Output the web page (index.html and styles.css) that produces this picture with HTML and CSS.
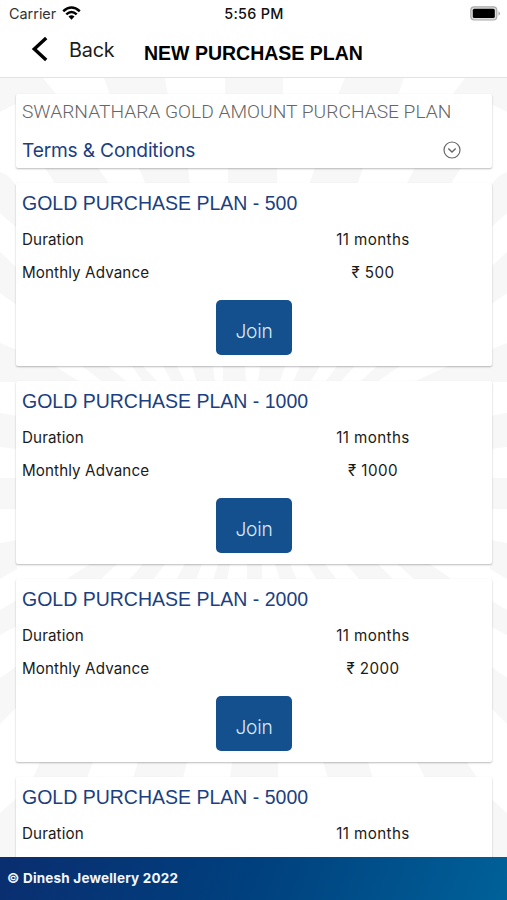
FILE: index.html
```html
<!DOCTYPE html>
<html lang="en">
<head>
<meta charset="utf-8">
<title>New Purchase Plan</title>
<link rel="stylesheet" href="styles.css">
</head>
<body>
<div class="screen">
  <header class="top">
    <div class="status">
      <div class="carrier"><span>Carrier</span>
        <svg width="19" height="14" viewBox="0 0 19 14"><g fill="none" stroke="#000" stroke-width="2.5"><path d="M1.2 5.2Q9.5 -2.3 17.8 5.2"/><path d="M4.3 8.4Q9.5 3.7 14.7 8.4"/></g><path d="M6.5 10.6Q9.5 8.1 12.500 10.600L9.500 13.700Z"/></svg>
      </div>
      <div class="clock">5:56 PM</div>
      <div class="power">
        <svg width="31" height="15" viewBox="0 0 31 15"><rect x=".8" y=".8" width="26" height="13.200" rx="3.500" fill="#ddd" stroke="#aaa" stroke-width="1.200"/><rect x="2.800" y="2.800" width="22" height="9.200" rx="1.500"/><path d="M28.500 5.200q3 2.200 0 4.500z" fill="#aaa"/></svg>
      </div>
    </div>
    <div class="nav">
      <svg class="chevron" width="18" height="28" viewBox="0 0 18 28"><path d="M15.200 3L3.300 14L15.200 25" fill="none" stroke="#000" stroke-width="3.400"/></svg>
      <span class="back">Back</span>
      <h1>NEW PURCHASE PLAN</h1>
    </div>
  </header>
  <main>
    <svg class="rays" width="507" height="779" viewBox="0 78 507 779">
      <g fill="#f7f7f7">
        <path d="M0 78H43L57 95Q25 97 0 112ZM104 78H165L168 95H110ZM225 78H283V95H225ZM345 78H404L398 95H338ZM465 78H507V112Q482 97 452 95Z"/>
        <path d="M45 168H98L110 185H56ZM139 168H188L190 185H146ZM228 168H277V185H228ZM315 168H363L357 185H309ZM415 168H461L450 185H406Z"/>
        <path d="M0 366H55L80 382H0ZM82 366H108L127 382H103ZM132 366H143L158 382H143ZM163 366H177L185 382H172ZM192 366H213L215 382H197ZM223 366H245L246 382H223ZM260 366H285L280 382H258ZM300 366H320L310 382H293ZM337 366H355L340 382H325ZM377 366H400L377 382H360ZM448 366H507V382H413Z"/>
        <path d="M90 564H117L100 580H65ZM143 564H165L153 580H129ZM185 564H202L196 580H176ZM218 564H230L227 580H213ZM247 564H262V580H247ZM275 564H290L297 580H280ZM307 564H325L337 580H317ZM346 564H378L394 580H360ZM397 564H430L453 580H415Z"/>
        <path d="M40 762H93L87 778H33ZM138 762H187L183 778H133ZM232 762H278V778H230ZM323 762H368L373 778H328ZM417 762H467L477 778H425Z"/>
        <path id="side" d="M0 172Q9 174 17 187V228L0 213ZM0 252L17 268V305L0 293ZM0 343L17 350V382L0 373ZM0 413L17 416V449L0 447ZM0 478H17V509H0ZM0 543L17 540V569L0 579ZM0 610L17 600V626L0 635ZM0 678L17 666V707L0 724ZM0 813L17 798V857H0Z"/>
        <use href="#side" transform="translate(507 0) scale(-1 1)"/>
      </g>
    </svg>
    <section class="card terms">
      <h2 class="scheme">SWARNATHARA GOLD AMOUNT PURCHASE PLAN</h2>
      <div class="terms-row"><span>Terms &amp; Conditions</span>
        <svg width="18" height="18" viewBox="0 0 18 18" fill="none" stroke="#666"><circle cx="9" cy="9" r="8" stroke-width="1.200"/><path d="M5.300 7.500L9 11.100L12.700 7.500" stroke-width="1.400"/></svg>
      </div>
    </section>
    <section class="card plan">
      <h2>GOLD PURCHASE PLAN - 500</h2>
      <div class="row"><span>Duration</span><span class="value">11 months</span></div>
      <div class="row"><span>Monthly Advance</span><span class="value">₹ 500</span></div>
      <button>Join</button>
    </section>
    <section class="card plan">
      <h2>GOLD PURCHASE PLAN - 1000</h2>
      <div class="row"><span>Duration</span><span class="value">11 months</span></div>
      <div class="row"><span>Monthly Advance</span><span class="value">₹ 1000</span></div>
      <button>Join</button>
    </section>
    <section class="card plan">
      <h2>GOLD PURCHASE PLAN - 2000</h2>
      <div class="row"><span>Duration</span><span class="value">11 months</span></div>
      <div class="row"><span>Monthly Advance</span><span class="value">₹ 2000</span></div>
      <button>Join</button>
    </section>
    <section class="card plan">
      <h2>GOLD PURCHASE PLAN - 5000</h2>
      <div class="row"><span>Duration</span><span class="value">11 months</span></div>
    </section>
  </main>
  <footer>© Dinesh Jewellery 2022</footer>
</div>
</body>
</html>
```
FILE: styles.css
```css
* { box-sizing: border-box; }
body { margin: 0; background: #fff; color: #1b1b1b; font-family: Inter, sans-serif; }
h1, h2 { margin: 0; font-family: "Liberation Sans", sans-serif; white-space: nowrap; }
.screen { width: 507px; height: 900px; display: flex; flex-direction: column; overflow: hidden; }
.top { height: 78px; flex: none; background: #fff; border-bottom: 1px solid #e3e3e3; position: relative; }
.status { height: 28px; display: grid; grid-template-columns: 1fr 1fr 1fr; align-items: center; padding: 0 6px 0 9px; font-size: 14.4px; line-height: 28px; }
.carrier { display: flex; align-items: center; gap: 6px; color: #333; }
.carrier svg { margin-top: -3px; }
.clock { text-align: center; font-weight: 500; color: #111; letter-spacing: .3px; padding-right: 2px; }
.power { display: flex; justify-content: flex-end; margin-top: -2px; }
.nav { display: flex; align-items: center; height: 42px; padding-left: 31px; }
.chevron { flex: none; }
.back { font-size: 19.8px; letter-spacing: -.2px; margin-left: 20px; width: 75px; padding-top: 2px; }
h1 { font-size: 19.5px; font-weight: 700; color: #000; padding-top: 8px; }
main { flex: 1; min-height: 0; overflow: hidden; position: relative; padding: 16px 15px 0 16px; display: flex; flex-direction: column; gap: 15px; }
.rays { position: absolute; left: 0; top: 0; }
.card { position: relative; flex: none; background: #fff; border-radius: 2px; padding: 0 6px; box-shadow: 0 1px 2px rgba(0,0,0,.27); }
.terms { height: 74px; }
.scheme { font-size: 19.2px; font-family: Roboto, sans-serif; font-weight: 300; line-height: 36px; color: #666; }
.terms-row { display: flex; justify-content: space-between; align-items: center; height: 40px; padding-right: 25px; font-size: 19.2px; letter-spacing: -.2px; color: #1c3f80; }
.plan { height: 183px; display: flex; flex-direction: column; }
.plan h2 { font-size: 19.5px; font-weight: 400; line-height: 40px; color: #1c3f80; }
.row { display: grid; grid-template-columns: 1fr 226px; height: 33px; line-height: 33px; font-size: 15.2px; letter-spacing: .1px; }
.value { text-align: center; letter-spacing: .4px; }
button { align-self: center; margin-top: 11px; width: 76px; height: 55px; border: 0; border-radius: 5px; background: #144f8e; color: #dce8f8; font: 300 19.2px Inter, sans-serif; letter-spacing: -.2px; padding: 7px 0 0; }
footer { flex: none; height: 43px; line-height: 43px; padding-left: 7px; color: #f4f7ff; font-size: 13.5px; letter-spacing: .2px; font-weight: 700; background: linear-gradient(110deg, #0a2e70, #00407e 50%, #006199); position: relative; }
```
